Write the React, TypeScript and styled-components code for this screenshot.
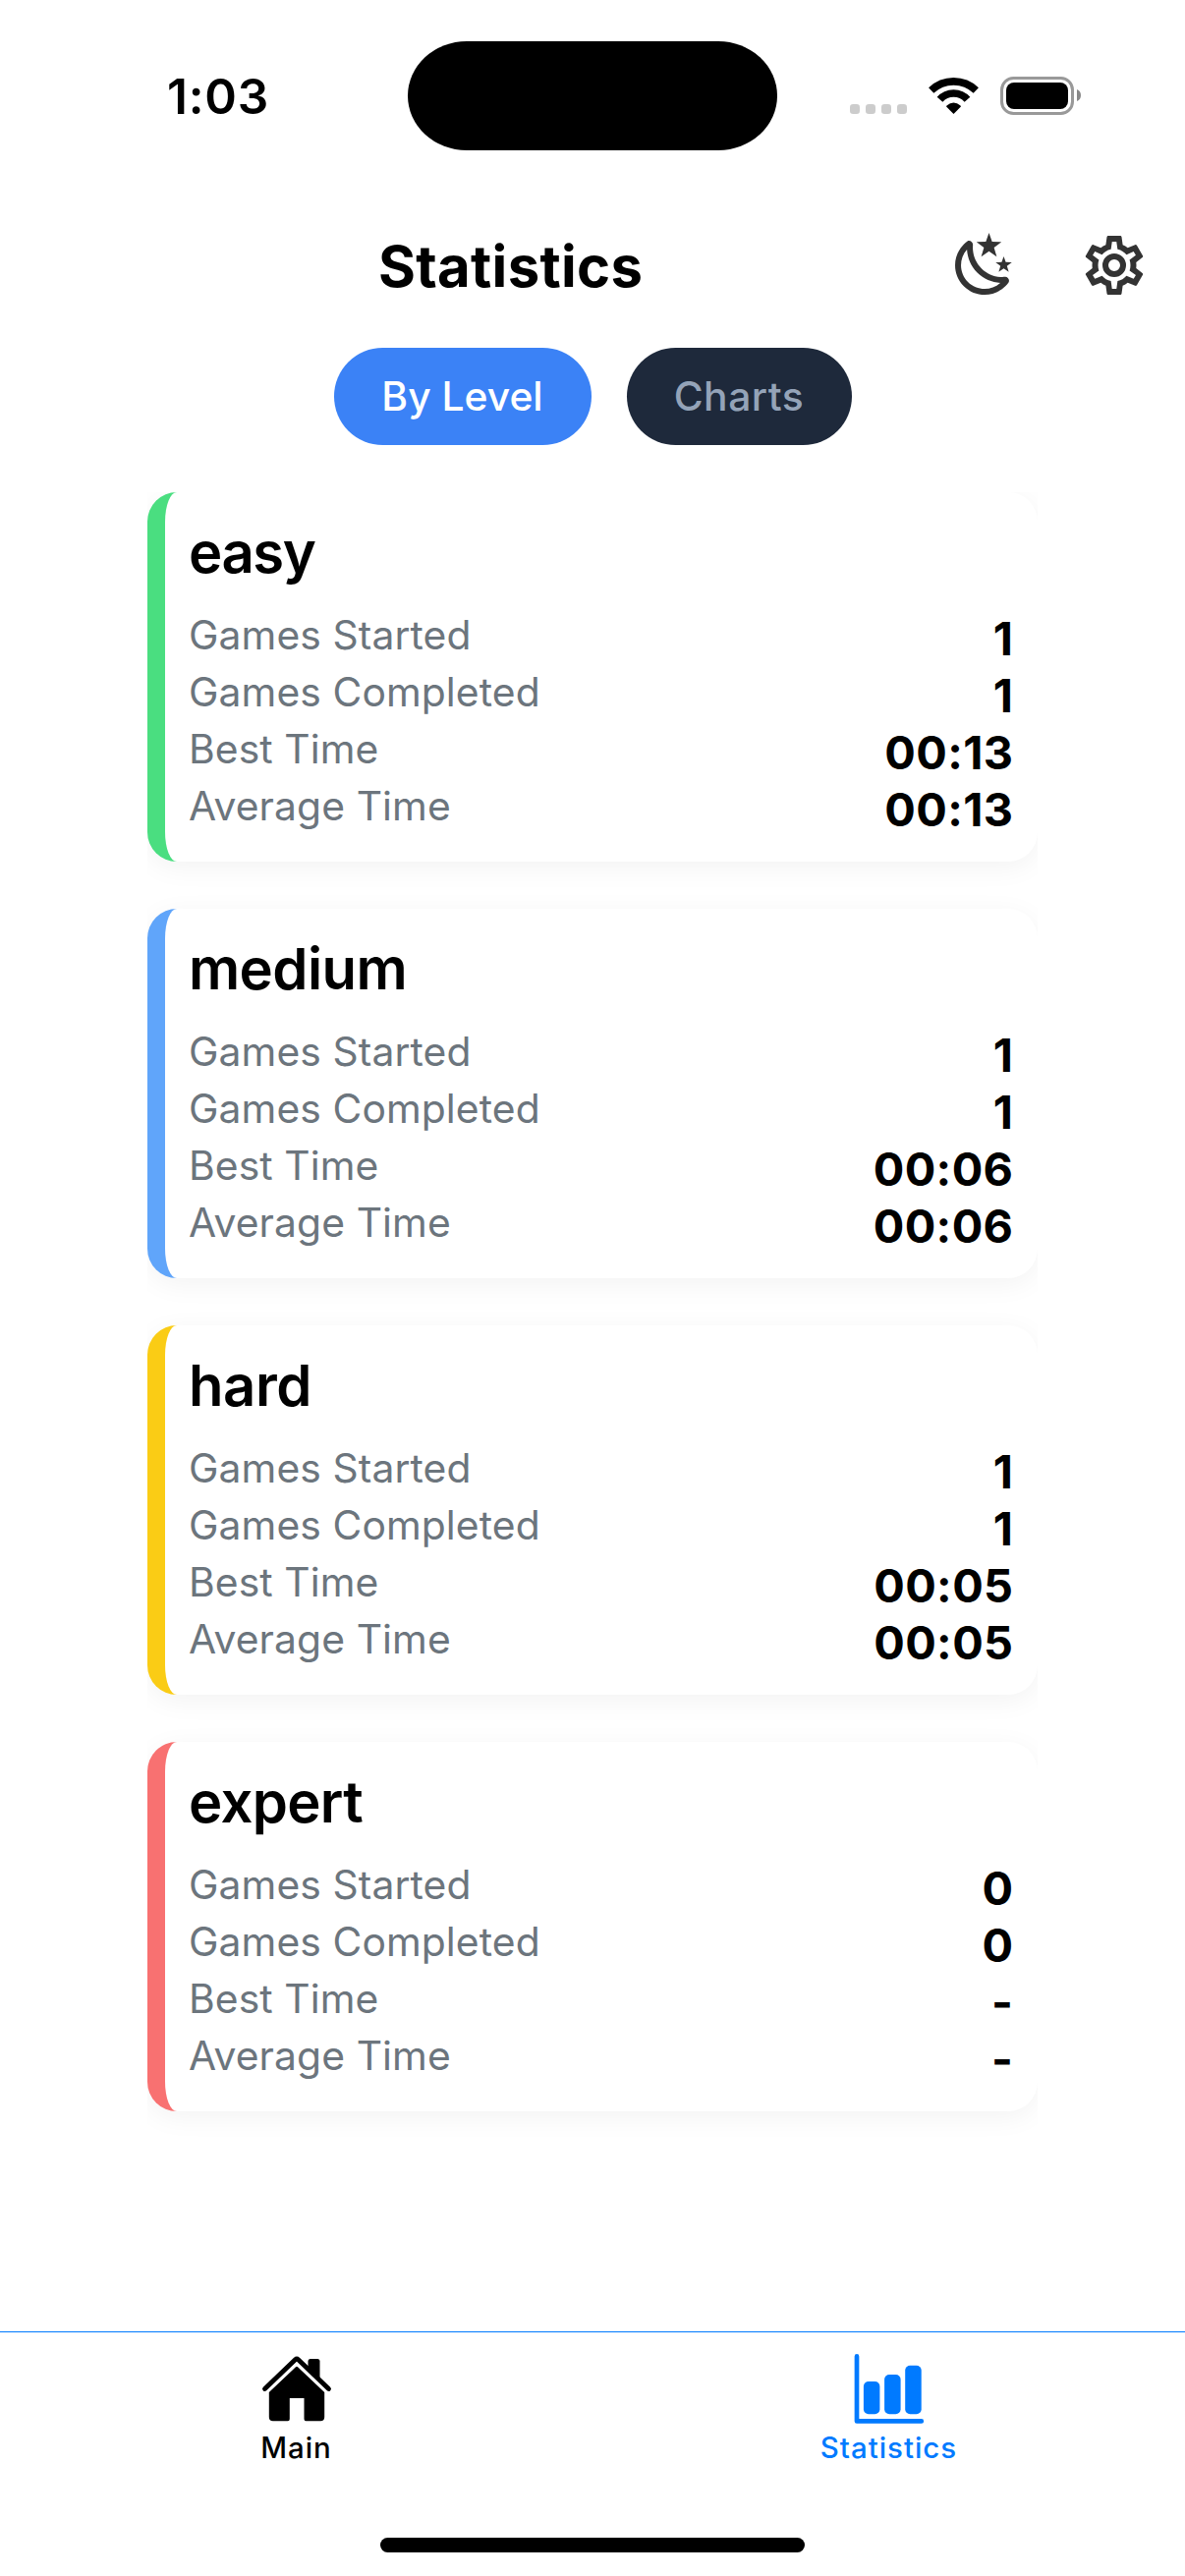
import React from "react";
import styled, { createGlobalStyle } from "styled-components";

const GlobalStyle = createGlobalStyle`
  *, *::before, *::after { box-sizing: border-box; }
  html, body { margin: 0; padding: 0; background: #fff; }
  body { font-family: Inter, "Liberation Sans", sans-serif; color: #000; }
  h1, h2, p { margin: 0; }
  button { border: 0; padding: 0; margin: 0; background: none; font: inherit; color: inherit; }
`;

const Screen = styled.div`
  display: flex;
  flex-direction: column;
  width: 1206px;
  height: 2622px;
  overflow: hidden;
  background: #fff;
`;

const StatusBar = styled.header`
  display: grid;
  grid-template-columns: 415px 376px 415px;
  height: 177px;
  padding-top: 41.5px;
  align-items: start;
`;

const Clock = styled.div`
  padding-left: 170px;
  padding-top: 26px;
  font-size: 49.5px;
  font-weight: 600;
  line-height: 60px;
  letter-spacing: 0.8px;
`;

const Island = styled.div`
  height: 111px;
  border-radius: 60px / 55.5px;
  background: #000;
`;

const Indicators = styled.div`
  display: flex;
  padding: 36.5px 0 0 74px;
`;

const StatusGlyphs = styled.svg`
  display: block;
  width: 236px;
  height: 39px;
`;

const TitleBar = styled.div`
  display: grid;
  grid-template-columns: 966px 72px 132px;
  height: 177px;
  padding-top: 9px;
  align-items: center;
`;

const Title = styled.h1`
  padding-left: 385px;
  padding-top: 2px;
  font-size: 58px;
  font-weight: 700;
  line-height: 72px;
  letter-spacing: 0.3px;
`;

const IconButton = styled.button`
  display: flex;
  justify-self: end;
  width: 72px;
  height: 72px;
`;

const Glyph = styled.svg`
  width: 72px;
  height: 72px;
  fill: #333;
`;

const Segments = styled.nav`
  display: flex;
  justify-content: center;
  gap: 36px;
  height: 147px;
`;

const Segment = styled.button<{ $active?: boolean; $width: number }>`
  display: flex;
  align-items: center;
  justify-content: center;
  width: ${(p) => p.$width}px;
  height: 99px;
  border-radius: 60px;
  background: ${(p) => (p.$active ? "#3b82f6" : "#1e293b")};
  color: ${(p) => (p.$active ? "#fff" : "#94a3b8")};
  font-size: 40.8px;
  font-weight: 500;
  line-height: 51px;
  letter-spacing: ${(p) => (p.$active ? 0 : 0.5)}px;
`;

const CardList = styled.main`
  flex: 1;
  display: flex;
  flex-direction: column;
  gap: 48px;
  margin: 0 150px;
  overflow: hidden;
`;

const Card = styled.section<{ $accent: string }>`
  flex: none;
  height: 376px;
  padding: 24px;
  border-left: 18px solid ${(p) => p.$accent};
  border-radius: 30px;
  background: #fff;
  box-shadow: 0 6px 28px rgba(0, 0, 0, 0.05);
`;

const Level = styled.h2<{ $tracking: number }>`
  height: 72px;
  margin-bottom: 24px;
  padding-top: 1px;
  font-size: 58px;
  font-weight: 600;
  line-height: 72px;
  letter-spacing: ${(p) => p.$tracking}px;
`;

const Row = styled.div`
  display: flex;
  justify-content: space-between;
  height: 58px;
`;

const Label = styled.span`
  color: #6c757d;
  font-size: 40.8px;
  line-height: 50px;
  letter-spacing: 0.1px;
`;

const Value = styled.span`
  margin-right: 0.6px;
  font-size: 46.8px;
  font-weight: 700;
  line-height: 58px;
  letter-spacing: 0.4px;
`;

const TabBar = styled.footer`
  display: grid;
  grid-template-columns: 1fr 1fr;
  height: 210px;
  border-top: 1px solid #007aff;
`;

const Tab = styled.button<{ $active?: boolean }>`
  display: flex;
  flex-direction: column;
  align-items: center;
  padding-top: 18px;
  color: ${(p) => (p.$active ? "#007aff" : "#000")};
  font-size: 29.4px;
  font-weight: 500;
  line-height: 36px;
  letter-spacing: 1px;
`;

const TabIcon = styled.svg`
  display: block;
  width: 78px;
  height: 78px;
  margin-bottom: 4px;
  fill: currentColor;
`;

const HomeIndicator = styled.div`
  flex: none;
  width: 432px;
  height: 15px;
  margin: 0 auto 24px;
  border-radius: 8px;
  background: #000;
`;

type Stats = {
  level: string;
  accent: string;
  tracking: number;
  values: [string, string, string, string];
};

const LABELS = ["Games Started", "Games Completed", "Best Time", "Average Time"];

const STATS: Stats[] = [
  { level: "easy", accent: "#4ade80", tracking: -1.4, values: ["1", "1", "00:13", "00:13"] },
  { level: "medium", accent: "#60a5fa", tracking: -0.6, values: ["1", "1", "00:06", "00:06"] },
  { level: "hard", accent: "#facc15", tracking: -0.4, values: ["1", "1", "00:05", "00:05"] },
  { level: "expert", accent: "#f87171", tracking: -0.7, values: ["0", "0", "-", "-"] },
];

const StatusIcons = () => (
  <StatusGlyphs viewBox="865 78 236 39">
    {[865, 881, 897, 913].map((x) => (
      <rect key={x} x={x} y="106" width="10" height="10" rx="3.2" fill="#ccc" />
    ))}
    <g fill="none" stroke="#000" strokeWidth="7.6">
      <path d="M947.7 92A33 33 0 0 1 993.3 92" />
      <path d="M956.5 101.3A18.6 18.6 0 0 1 984.5 101.3" />
    </g>
    <path d="M970.5 116L963.3 108.8Q962.8 108 963.5 107.4Q970.5 101.8 977.5 107.4Q978.2 108 977.7 108.8Z" />
    <rect x="1019.5" y="79.5" width="72" height="36" rx="12" fill="none" stroke="#999" strokeWidth="3" />
    <rect x="1024" y="84" width="63" height="27" rx="8" />
    <path d="M1096 91Q1100 92.5 1100 97T1096 103Z" fill="#888" />
  </StatusGlyphs>
);

const MoonIcon = () => (
  <Glyph viewBox="0 0 24 24">
    <path d="M17.75,4.09L15.22,6.03L16.13,9.09L13.5,7.28L10.87,9.09L11.78,6.03L9.25,4.09L12.44,4L13.5,1L14.56,4L17.75,4.09M21.25,11L19.61,12.25L20.2,14.23L18.5,13.06L16.8,14.23L17.39,12.25L15.75,11L17.81,10.95L18.5,9L19.19,10.95L21.25,11M18.97,15.95C19.8,15.87 20.69,17.05 20.16,17.8C19.84,18.25 19.5,18.67 19.08,19.07C15.17,23 8.84,23 4.94,19.07C1.03,15.17 1.03,8.83 4.94,4.93C5.34,4.53 5.76,4.17 6.21,3.85C6.96,3.32 8.14,4.21 8.06,5.04C7.79,7.9 8.75,10.87 10.95,13.06C13.14,15.26 16.1,16.22 18.97,15.95M17.33,17.97C14.5,17.81 11.7,16.64 9.53,14.5C7.36,12.31 6.2,9.5 6.04,6.68C3.23,9.82 3.34,14.64 6.35,17.66C9.37,20.67 14.19,20.78 17.33,17.97Z" />
  </Glyph>
);

const CogIcon = () => (
  <Glyph viewBox="0 0 24 24">
    <path d="M12,8A4,4 0 0,1 16,12A4,4 0 0,1 12,16A4,4 0 0,1 8,12A4,4 0 0,1 12,8M12,10A2,2 0 0,0 10,12A2,2 0 0,0 12,14A2,2 0 0,0 14,12A2,2 0 0,0 12,10M10,22C9.75,22 9.54,21.82 9.5,21.58L9.13,18.93C8.5,18.68 7.96,18.34 7.44,17.94L4.95,18.95C4.73,19.03 4.46,18.95 4.34,18.73L2.34,15.27C2.21,15.05 2.27,14.78 2.46,14.63L4.57,12.97L4.5,12L4.57,11L2.46,9.37C2.27,9.22 2.21,8.95 2.34,8.73L4.34,5.27C4.46,5.05 4.73,4.96 4.95,5.05L7.44,6.05C7.96,5.66 8.5,5.32 9.13,5.07L9.5,2.42C9.54,2.18 9.75,2 10,2H14C14.25,2 14.46,2.18 14.5,2.42L14.87,5.07C15.5,5.32 16.04,5.66 16.56,6.05L19.05,5.05C19.27,4.96 19.54,5.05 19.66,5.27L21.66,8.73C21.79,8.95 21.73,9.22 21.54,9.37L19.43,11L19.5,12L19.43,13L21.54,14.63C21.73,14.78 21.79,15.05 21.66,15.27L19.66,18.73C19.54,18.95 19.27,19.04 19.05,18.95L16.56,17.95C16.04,18.34 15.5,18.68 14.87,18.93L14.5,21.58C14.46,21.82 14.25,22 14,22H10M11.25,4L10.88,6.61C9.68,6.86 8.62,7.5 7.85,8.39L5.44,7.35L4.69,8.6L6.8,10.15C6.4,11.37 6.4,12.64 6.8,13.8L4.68,15.36L5.43,16.61L7.86,15.57C8.63,16.46 9.68,17.1 10.87,17.34L11.24,20H12.76L13.13,17.35C14.32,17.1 15.37,16.46 16.14,15.57L18.57,16.61L19.32,15.36L17.2,13.81C17.6,12.64 17.6,11.37 17.2,10.15L19.31,8.6L18.56,7.35L16.15,8.39C15.38,7.5 14.32,6.86 13.12,6.62L12.75,4H11.25Z" />
  </Glyph>
);

const HouseIcon = () => (
  <TabIcon viewBox="262.500 2391 78 78">
    <path d="M269 2430.500L300 2400.800Q301.500 2399.400 303 2400.800L334 2430.500" fill="none" stroke="currentColor" strokeWidth="4.8" strokeLinecap="round" strokeLinejoin="round" />
    <path d="M313 2411V2402.500Q313 2400 315.500 2400H322.500Q325 2400 325 2402.500V2422Z" />
    <path d="M300.500 2408.300Q301.500 2407.300 302.500 2408.300L329.700 2434V2459.300Q329.700 2463.300 325.700 2463.300H311Q309 2463.300 309 2461.300V2440H294.300V2461.300Q294.300 2463.300 292.300 2463.300H277.300Q273.300 2463.300 273.300 2459.300V2434Z" />
  </TabIcon>
);

const ChartIcon = () => (
  <TabIcon viewBox="865.700 2391 78 78">
    <path d="M871.700 2397.400V2463.400H937.500" fill="none" stroke="currentColor" strokeWidth="4.700" strokeLinecap="round" strokeLinejoin="round" />
    <rect x="878.600" y="2423" width="16.500" height="33.300" rx="5" />
    <rect x="899.800" y="2416" width="16.500" height="40.300" rx="5" />
    <rect x="920.900" y="2406.800" width="16.500" height="49.500" rx="5" />
  </TabIcon>
);

export default function App() {
  return (
    <>
      <GlobalStyle />
      <Screen>
        <StatusBar>
          <Clock>1:03</Clock>
          <Island />
          <Indicators>
            <StatusIcons />
          </Indicators>
        </StatusBar>
        <TitleBar>
          <Title>Statistics</Title>
          <IconButton aria-label="Theme">
            <MoonIcon />
          </IconButton>
          <IconButton aria-label="Settings">
            <CogIcon />
          </IconButton>
        </TitleBar>
        <Segments>
          <Segment $active $width={262}>By Level</Segment>
          <Segment $width={229}>Charts</Segment>
        </Segments>
        <CardList>
          {STATS.map((s) => (
            <Card key={s.level} $accent={s.accent}>
              <Level $tracking={s.tracking}>{s.level}</Level>
              {LABELS.map((label, i) => (
                <Row key={label}>
                  <Label>{label}</Label>
                  <Value>{s.values[i]}</Value>
                </Row>
              ))}
            </Card>
          ))}
        </CardList>
        <TabBar>
          <Tab>
            <HouseIcon />
            Main
          </Tab>
          <Tab $active>
            <ChartIcon />
            Statistics
          </Tab>
        </TabBar>
        <HomeIndicator />
      </Screen>
    </>
  );
}
